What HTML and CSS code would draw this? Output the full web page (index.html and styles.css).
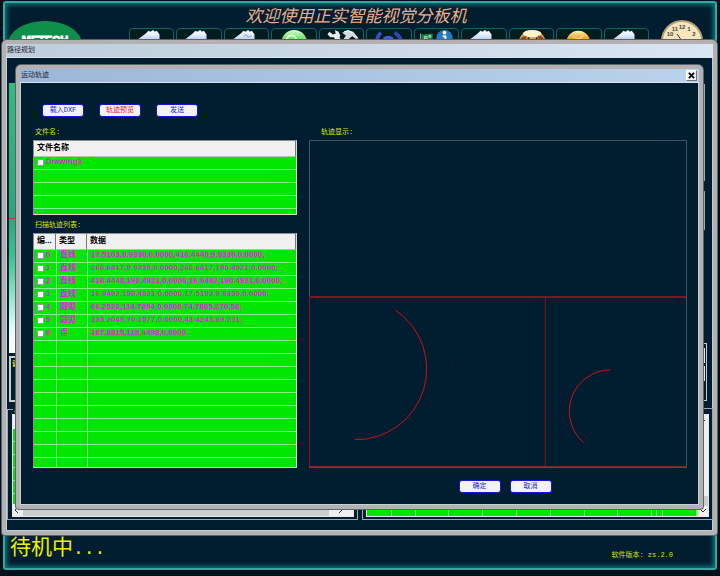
FILE: index.html
```html
<!DOCTYPE html>
<html lang="zh-CN">
<head>
<meta charset="utf-8">
<title>路径规划</title>
<link rel="stylesheet" href="styles.css">
</head>
<body>
<svg class="defs" aria-hidden="true">
  <defs>
    <linearGradient id="paper" x1="0" y1="0" x2="0" y2="1">
      <stop offset="0" stop-color="#ffffff"/><stop offset=".25" stop-color="#e4ecff"/><stop offset=".6" stop-color="#9ab4f4"/>
    </linearGradient>
    <linearGradient id="green" x1="0" y1="0" x2="0" y2="1">
      <stop offset="0" stop-color="#d8ffd0"/><stop offset=".4" stop-color="#5ade50"/><stop offset="1" stop-color="#2cb22c"/>
    </linearGradient>
    <linearGradient id="amber" x1="0" y1="0" x2="0" y2="1">
      <stop offset="0" stop-color="#fff2c0"/><stop offset=".3" stop-color="#f5a623"/><stop offset="1" stop-color="#d87800"/>
    </linearGradient>
    <symbol id="peak" viewBox="0 0 45 24">
      <path d="M8 11 L16 5 L19 2 L21 3 L24 1 L26 3 L28 2 L31 6 L31 24 H-4 Z" fill="url(#paper)"/>
    </symbol>
  </defs>
</svg>
<div class="desktop">
  <main class="frame">
    <header class="banner">
      <svg class="logo" viewBox="0 0 74 46" role="img" aria-label="METECH">
        <ellipse cx="37" cy="23" rx="37" ry="23" fill="#0f8f4a"/>
        <text x="37" y="23" text-anchor="middle" class="logo-text">METECH</text>
      </svg>
      <div class="center">
        <h1>欢迎使用正实智能视觉分板机</h1>
        <nav class="tools">
          <button type="button" aria-label="1"><svg viewBox="0 0 45 24"><use href="#peak"/></svg></button>
          <button type="button" aria-label="2"><svg viewBox="0 0 45 24"><use href="#peak"/></svg></button>
          <button type="button" aria-label="3"><svg viewBox="0 0 45 24"><use href="#peak"/><path d="M19 8l3-2 2 3 4-2" stroke="#7c9bd0" fill="none"/></svg></button>
          <button type="button" aria-label="4"><svg viewBox="0 0 45 24"><circle cx="23" cy="15" r="14" fill="url(#green)"/><circle cx="20" cy="12" r="5" fill="none" stroke="#eaffea" stroke-width="2"/></svg></button>
          <button type="button" aria-label="5"><svg viewBox="0 0 45 24"><path d="M9 3l4 3 3-1-1-4 4 2 2 4-1 2 6 9-5 3-7-12-4 0-3-3z" fill="#e8ecee"/><path d="M23 4l6-3 6 2 6 7-3 1-4-3-3 2-7 12-5-2 8-13z" fill="#d4dadd"/><path d="M25 3l5-1 4 2" stroke="#fff" fill="none"/></svg></button>
          <button type="button" aria-label="6"><svg viewBox="0 0 45 24"><path d="M14 4q-6 6-4 15" fill="none" stroke="#3450c8" stroke-width="4"/><path d="M29 4q8 5 8 14" fill="none" stroke="#2c48b8" stroke-width="4"/><path d="M17 11q5-4 10 0" fill="none" stroke="#3c60d8" stroke-width="3"/></svg></button>
          <button type="button" aria-label="7"><svg viewBox="0 0 45 24"><path d="M6 6l12-1v16H7z" fill="#15803c"/><path d="M5 5v18M9 8h3v3H9zM14 7h2v2h-2z" stroke="#b8d8c0" fill="#49b06c"/><path d="M12 13h10v8H12z" fill="#0c5c80"/><circle cx="31" cy="10" r="9" fill="#2478c4"/><circle cx="31" cy="4" r="2" fill="#fff"/><path d="M29 8h3v9" stroke="#fff" stroke-width="2" fill="none"/></svg></button>
          <button type="button" aria-label="8"><svg viewBox="0 0 45 24"><use href="#peak"/></svg></button>
          <button type="button" aria-label="9"><svg viewBox="0 0 45 24"><circle cx="23" cy="16" r="15" fill="#d89a48"/><ellipse cx="23" cy="5" rx="10" ry="4" fill="#fff3cf"/><path d="M10 11q3-4 7-3l-1 6zM29 7q6 0 7 5l-5 2z" fill="#8a4a18"/><circle cx="19" cy="10" r="1" fill="#222"/><circle cx="28" cy="10" r="1" fill="#222"/></svg></button>
          <button type="button" aria-label="10"><svg viewBox="0 0 45 24"><circle cx="22" cy="15" r="13" fill="url(#amber)"/><path d="M16 8l6 3 6-4M19 13l7-4" stroke="#ffe0a0" fill="none"/></svg></button>
          <button type="button" aria-label="11"><svg viewBox="0 0 45 24"><use href="#peak"/></svg></button>
        </nav>
      </div>
      <svg class="clock" viewBox="0 0 42 42" role="img" aria-label="时钟">
        <circle cx="21" cy="21" r="20" fill="#f7e6bd" stroke="#b7a078" stroke-width="2"/>
        <g class="clock-text" text-anchor="middle">
          <text x="21" y="9">12</text><text x="28" y="11">1</text><text x="33" y="16">2</text><text x="14" y="11">11</text><text x="9" y="16">10</text>
        </g>
        <path d="M21 21L16 14" stroke="#333"/>
      </svg>
    </header>
    <footer class="status">
      <p class="state">待机中<span>...</span></p>
      <p class="version">软件版本: zs.2.0</p>
    </footer>
  </main>

  <section class="window path">
    <h2 class="titlebar">路径规划</h2>
    <div class="path-body">
      <div class="path-top">
        <div class="path-left">
          <div class="camera"></div>
          <div class="panel">调</div>
        </div>
        <div class="path-right">
          <div class="bar tall"></div>
          <div class="bar short"></div>
          <div class="fields"><i></i><i></i></div>
        </div>
      </div>
      <div class="groups">
        <fieldset>
          <legend>点</legend>
          <div class="list">
            <div class="list-head"></div>
            <div class="list-rows"></div>
            <div class="hscroll">
              <svg viewBox="0 0 8 8"><path d="M5 1L2 4l3 3"/></svg>
              <i></i>
              <svg viewBox="0 0 8 8"><path d="M3 1l3 3-3 3"/></svg>
            </div>
          </div>
        </fieldset>
        <fieldset>
          <div class="list sided">
            <div class="cells"><i></i><i></i><i></i><i></i><i></i><i></i><i></i><i></i><i></i><i></i><i></i><i></i><i></i></div>
            <div class="vscroll">
              <svg viewBox="0 0 8 8"><path d="M2 5l2-2 2 2"/></svg>
              <i></i>
              <svg viewBox="0 0 8 8"><path d="M1 2l3 3 3-3"/></svg>
            </div>
          </div>
        </fieldset>
      </div>
    </div>
  </section>

  <section class="window dialog" role="dialog" aria-labelledby="dlg">
    <div class="titlebar">
      <h2 id="dlg">运动轨迹</h2>
      <button type="button" class="close" aria-label="关闭"><svg viewBox="0 0 8 8"><path d="M1 1l6 6M7 1l-6 6"/></svg></button>
    </div>
    <div class="dialog-body">
      <div class="actions">
        <button type="button" class="btn">载入DXF</button>
        <button type="button" class="btn active">轨迹预览</button>
        <button type="button" class="btn">发送</button>
      </div>
      <div class="columns">
        <div class="lists">
          <h3>文件名:</h3>
          <div class="grid files">
            <table>
              <thead><tr><th>文件名称</th></tr></thead>
              <tbody>
                <tr><td><label><input type="checkbox">Drawing3</label></td></tr>
                <tr><td></td></tr><tr><td></td></tr><tr><td></td></tr><tr><td></td></tr>
              </tbody>
            </table>
          </div>
          <h3>扫描轨迹列表:</h3>
          <div class="grid tracks">
            <table>
              <colgroup><col class="c-id"><col class="c-type"><col></colgroup>
              <thead><tr><th>编...</th><th>类型</th><th>数据</th></tr></thead>
              <tbody>
                <tr><td><label><input type="checkbox">0</label></td><td>直线</td><td>17.5103,9.9330,0.0000,416.4440,9.9330,0.0000,</td></tr>
                <tr><td><label><input type="checkbox">1</label></td><td>直线</td><td>266.6417,9.9330,0.0000,266.6417,190.4921,0.0000,</td></tr>
                <tr><td><label><input type="checkbox">2</label></td><td>直线</td><td>416.4448,190.4921,0.0000,16.9492,190.4921,0.0000,</td></tr>
                <tr><td><label><input type="checkbox">3</label></td><td>直线</td><td>16.9492,190.4921,0.0000,17.5103,9.9330,0.0000,</td></tr>
                <tr><td><label><input type="checkbox">4</label></td><td>圆弧</td><td>66.2526,114.7894,0.0000,74.7865,270,56,</td></tr>
                <tr><td><label><input type="checkbox">5</label></td><td>圆弧</td><td>335.2049,70.2577,0.0000,43.4243,89,231,</td></tr>
                <tr><td><label><input type="checkbox">6</label></td><td>点</td><td>167.8815,118.4498,0.0000</td></tr>
                <tr><td></td><td></td><td></td></tr>
                <tr><td></td><td></td><td></td></tr>
                <tr><td></td><td></td><td></td></tr>
                <tr><td></td><td></td><td></td></tr>
                <tr><td></td><td></td><td></td></tr>
                <tr><td></td><td></td><td></td></tr>
                <tr><td></td><td></td><td></td></tr>
                <tr><td></td><td></td><td></td></tr>
                <tr><td></td><td></td><td></td></tr>
                <tr><td></td><td></td><td></td></tr>
              </tbody>
            </table>
          </div>
        </div>
        <div class="preview">
          <h3>轨迹显示:</h3>
          <svg class="plot" viewBox="0 0 379 329" role="img" aria-label="轨迹显示">
            <path d="M.5 158V.5H378.5V328" fill="none" stroke="#46545f"/>
            <g fill="none" stroke="#d01018">
              <path d="M.5 158V328" stroke="#8e1420"/>
              <path d="M237 158V328" stroke="#8e1420"/>
              <path d="M0 157.500H378" stroke="#7c1624" stroke-width="2"/>
              <path d="M0 328H379" stroke="#a82430" stroke-width="2"/>
              <path d="M86.500 170.500A71 71 0 0 1 46 300.500"/>
              <path d="M302 230.500A41.500 41.500 0 0 0 275.500 303.500"/>
              <path d="M142.500 225v2" stroke="#4a1830"/>
            </g>
          </svg>
        </div>
      </div>
      <div class="confirm">
        <button type="button" class="btn">确定</button>
        <button type="button" class="btn">取消</button>
      </div>
    </div>
  </section>
</div>
</body>
</html>
```
FILE: styles.css
```css
* { box-sizing: border-box; }

body {
  margin: 0;
  background: #00111b;
  font: 7px/10px "Liberation Mono", "Noto Sans CJK SC", monospace;
  color: #d8e010;
}

h1, h2, h3, p { margin: 0; font-weight: normal; }
button { font: inherit; padding: 0; margin: 0; }
i { display: block; }
.defs { position: absolute; width: 0; height: 0; }

.desktop {
  position: relative;
  min-height: 100vh;
  display: flex;
  padding: 1px 3px 6px;
  overflow: hidden;
}

/* Main application frame */
.frame {
  flex: 1;
  display: flex;
  flex-direction: column;
  justify-content: space-between;
  background: #001e30;
  border: 2px solid #35a5a5;
  border-radius: 3px;
  box-shadow: inset 0 0 4px 2px #0b7774;
}

.banner { display: flex; padding: 0 12px 0 3px; }
.logo { width: 74px; height: 46px; margin-top: 18px; flex: none; }
.logo-text { font: bold 11px "Liberation Sans", sans-serif; fill: #fff; stroke: #fff; stroke-width: 1px; }
.center { flex: 1; margin: 2px 12px 0 47px; }
.center h1 {
  padding-right: 66px;
  text-align: center;
  font: italic 17px/19px "Noto Sans CJK SC", sans-serif;
  color: #eeae88;
}
.tools { display: flex; gap: 2px; margin-top: 4px; }
.tools button {
  flex: 1;
  height: 24px;
  background: #031c20;
  border: 1px solid #106468;
  border-radius: 4px;
}
.tools svg { display: block; width: 100%; height: 22px; overflow: hidden; }
.clock { width: 42px; height: 42px; margin-top: 17px; flex: none; }
.clock-text { font: bold 6px "Liberation Sans", sans-serif; fill: #444; }

.status { display: flex; justify-content: space-between; align-items: flex-end; padding: 0 42px 8px 5px; }
.state { margin-bottom: 1px; font: 21px/28px "Noto Sans CJK SC", sans-serif; color: #f0f000; }
.state span { font: 18px/20px "Liberation Mono", monospace; }

/* Windows */
.window {
  position: absolute;
  border: 4px solid #b3b1b1;
  border-radius: 5px 5px 3px 3px;
  background: #001e30;
  box-shadow: inset 0 0 0 1px #c4ced6, 0 0 0 1px #59656d;
  display: flex;
  flex-direction: column;
}
.titlebar {
  display: flex;
  align-items: center;
  justify-content: space-between;
  height: 14px;
  flex: none;
  padding: 0 2px 0 1px;
  color: #1c2430;
  font-size: 7px;
  line-height: 13px;
  border-bottom: 1px solid #dbe3ec;
}
.titlebar h2 { font-size: 7px; line-height: 13px; }

/* Path planning window */
.path { top: 40px; left: 2px; right: 3px; bottom: 41px; }
.path .titlebar { background: linear-gradient(90deg, #becddb, #d8e5f3); }
.path-body { flex: 1; display: flex; flex-direction: column; padding: 25px 0 11px 1px; }
.path-top { display: flex; justify-content: space-between; height: 321px; }
.path-left { width: 60px; padding-left: 2px; }
.camera {
  height: 270px;
  background: linear-gradient(180deg, transparent 135px, #b04030 135px, #b04030 136px, transparent 136px),
    linear-gradient(180deg, #2fbd80 0, #28a878 50%, #35c890 65%, #e8ffff 92%, #fff 100%);
}
.panel { height: 46px; margin-top: 3px; border: 2px solid #c6ced4; color: #f0f000; font-weight: bold; padding: 1px; }
.path-right { width: 60px; margin-right: 6px; display: flex; flex-direction: column; }
.bar { background: #7d868e; border: 1px solid #a4abb0; margin-right: 2px; border-radius: 2px; }
.bar.tall { height: 99px; }
.bar.short { height: 41px; margin-top: 8px; }
.fields { height: 58px; margin-top: 112px; border: 1px solid #c6ced4; padding: 4px 1px; display: grid; grid-template-rows: 15px 15px; gap: 3px; }
.fields i { background: #e4e6e8; }
.groups { flex: 1; display: grid; grid-template-columns: 1fr 1fr; gap: 4px; }
fieldset {
  margin: 0;
  padding: 0 3px 2px 4px;
  min-width: 0;
  border: 1px solid #9aa8b2;
}
fieldset + fieldset { margin-top: 4px; padding: 5px 3px 2px 3px; }
legend { padding: 0 1px; margin-left: 1px; color: #f0f000; font-weight: bold; }
.list { height: 103px; border: 1px solid #e6e8ea; display: flex; flex-direction: column; }
.list-head { height: 14px; background: #eee; }
.list-rows { flex: 1; background: repeating-linear-gradient(180deg, #00e600 0, #00e600 12px, #84f084 12px, #84f084 13px); }
.hscroll { display: flex; height: 12px; background: #f0f0f0; align-items: center; gap: 2px; }
.hscroll svg { width: 8px; height: 8px; }
.hscroll svg:last-child { margin: 0 9px 0 5px; }
.hscroll i { flex: 1; height: 12px; background: #cdcdcd; }
.hscroll path, .vscroll path { fill: none; stroke: #333; stroke-width: 1px; }
.sided { flex-direction: row; }
.cells { flex: 1; display: grid; grid-template-columns: 25px 24px 33px 34px 34px 34px 34px 33px 34px 5px 6px 34px 1fr; background: #00e600; }
.cells i { border-right: 1px solid #84f084; }
.vscroll { width: 11px; background: #f0f0f0; display: flex; flex-direction: column; }
.vscroll svg { width: 8px; height: 8px; margin: 1px; }
.vscroll svg:first-child { margin-bottom: auto; }
.vscroll i { height: 10px; background: #cdcdcd; }

/* Track dialog */
.dialog { top: 65px; left: 16px; right: 17px; }
.dialog .titlebar { background: linear-gradient(90deg, #9db7d8, #bad2eb); }
.close {
  width: 11px;
  height: 11px;
  background: #f0f0f0;
  border: 1px solid;
  border-color: #fff #777 #777 #fff;
  display: flex;
  align-items: center;
  justify-content: center;
}
.close svg { width: 7px; height: 7px; }
.close path { stroke: #000; stroke-width: 2px; }
.dialog-body { padding: 21px 12px 12px 13px; }
.actions { display: flex; gap: 15px; padding-left: 9px; }
.btn {
  width: 42px;
  height: 13px;
  border: 1px solid #1414dc;
  border-radius: 3px;
  background: #f2f2fe;
  color: #1a1af0;
  font-size: 7px;
  line-height: 11px;
  white-space: nowrap;
}
.btn.active { color: #f01818; }
.columns { display: grid; grid-template-columns: 264px 1fr; gap: 12px; margin-top: 10px; }
.columns h3 { font-size: 7px; line-height: 10px; margin-bottom: 3px; padding-left: 2px; }
.preview h3 { padding-left: 12px; }
.plot { display: block; width: 100%; }

.grid { overflow: hidden; border: 1px solid; border-color: #8a8f94 #dcdcdc #dcdcdc #8a8f94; background: #00e600; }
.files { height: 75px; margin-bottom: 5px; }
.tracks { height: 235px; }
table { width: 100%; border-collapse: separate; border-spacing: 0; table-layout: fixed; }
.c-id { width: 22px; }
.c-type { width: 31px; }
th, td { padding: 0 0 0 3px; text-align: left; vertical-align: top; white-space: nowrap; overflow: hidden; }
th {
  height: 16px;
  background: #f0f0f0;
  border-right: 1px solid #777;
  border-bottom: 1px solid #a8c8a8;
  color: #000;
  font: bold 8px/14px "Liberation Sans", "Noto Sans CJK SC", sans-serif;
}
td {
  height: 13px;
  border-bottom: 1px solid #84f084;
  color: #e818e8;
  font: bold 8px/10px "Liberation Sans", "Noto Sans CJK SC", sans-serif;
}
td + td { border-left: 1px solid #84f084; }
label { display: flex; align-items: center; gap: 2px; height: 10px; }
td input {
  appearance: none;
  flex: none;
  width: 7px;
  height: 7px;
  margin: 0;
  background: #fff;
  border: 1px solid #9a9a9a;
}

.confirm { display: flex; justify-content: center; gap: 9px; margin: 12px 0 0 276px; padding-left: 14px; }
```
